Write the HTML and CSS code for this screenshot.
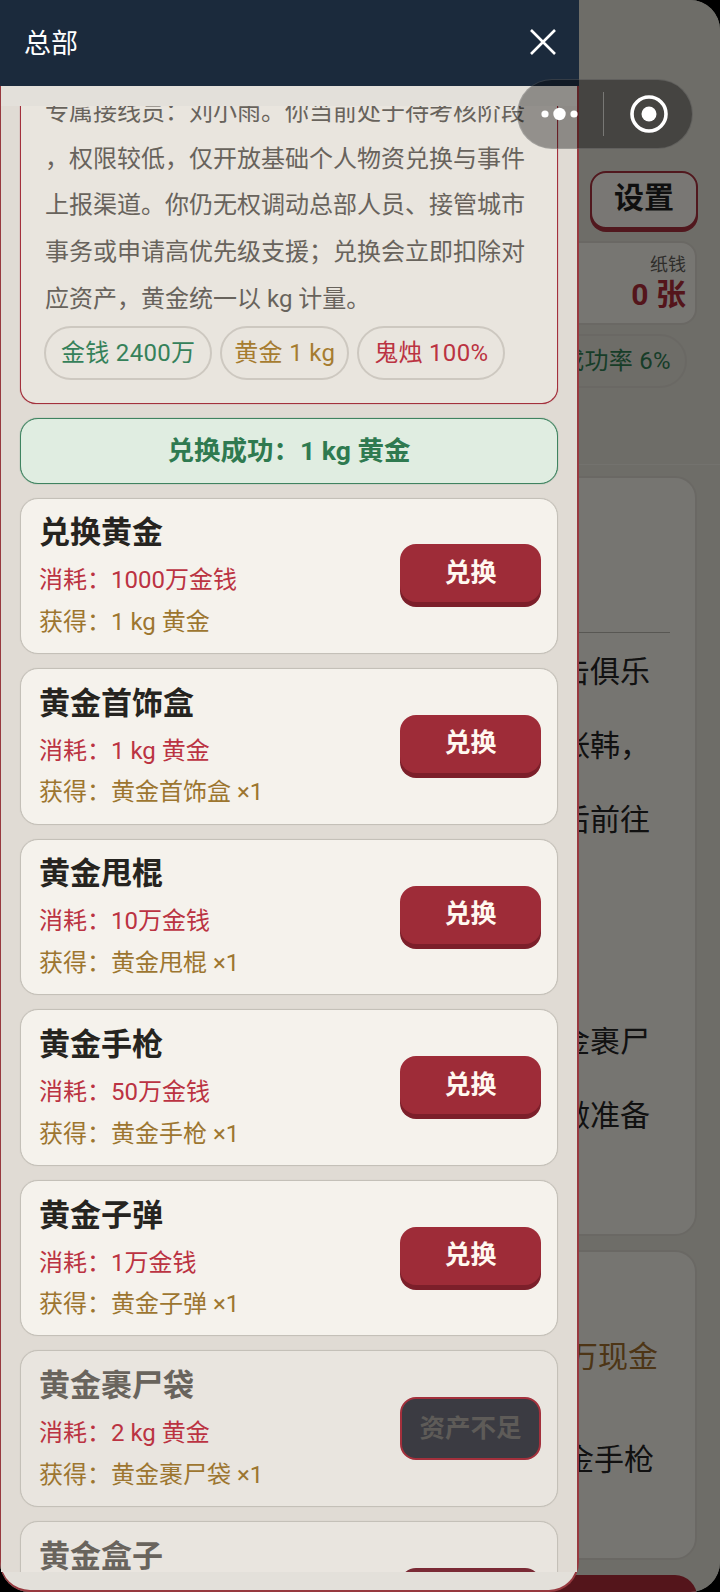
FILE: index.html
```html
<!DOCTYPE html>
<html lang="zh-CN">
<head>
    <meta charset="UTF-8">
    <meta name="viewport" content="width=device-width, initial-scale=1.0">
    <title>总部</title>
    <link rel="stylesheet" href="styles.css">
</head>
<body>

<div class="page">
    <div class="top-tools">
        <button class="btn-settings">设置</button>
    </div>
    <div class="stats">
        <div class="stat stat-gold">
            <small>黄金</small>
            <span>1 kg</span>
        </div>
        <div class="stat stat-paper">
            <small>纸钱</small>
            <span>0 张</span>
        </div>
    </div>
    <div class="rate-row">
        <div class="rate-chip">任务成功率 6%</div>
    </div>
    <div class="story-card">
        <div class="story-line"></div>
        <p>前往金樽拳击俱乐</p>
        <p>部找到老板张韩，</p>
        <p>或者在夜深后前往</p>
        <p class="story-gap">带上黄金裹尸</p>
        <p>袋，提前做准备</p>
    </div>
    <div class="reward-card">
        <p class="reward-money">奖励一百万现金</p>
        <p class="reward-item">以及黄金手枪</p>
    </div>
    <div class="bottom-bar"></div>
</div>

<div class="overlay"></div>

<div class="drawer">
    <div class="drawer-head">
        <span class="drawer-title">总部</span>
        <svg class="drawer-close" width="28" height="28" viewBox="0 0 28 28">
            <path d="M2 2 L26 26 M26 2 L2 26" stroke="#fff" stroke-width="2.6" fill="none"/>
        </svg>
    </div>
    <div class="drawer-main">
        <div class="drawer-scroll">
            <div class="intro">
                <p>专属接线员：刘小雨。你当前处于待考核阶段，权限较低，仅开放基础个人物资兑换与事件上报渠道。你仍无权调动总部人员、接管城市事务或申请高优先级支援；兑换会立即扣除对应资产，黄金统一以 kg 计量。</p>
                <div class="chips">
                    <span class="chip chip-green">金钱 2400万</span>
                    <span class="chip chip-gold">黄金 1 kg</span>
                    <span class="chip chip-red">鬼烛 100%</span>
                </div>
            </div>
            <div class="notice">兑换成功：1 kg 黄金</div>

            <div class="item">
                <div class="item-info">
                    <h3>兑换黄金</h3>
                    <p class="cost">消耗：1000万金钱</p>
                    <p class="gain">获得：1 kg 黄金</p>
                </div>
                <button class="btn-swap">兑换</button>
            </div>
            <div class="item">
                <div class="item-info">
                    <h3>黄金首饰盒</h3>
                    <p class="cost">消耗：1 kg 黄金</p>
                    <p class="gain">获得：黄金首饰盒 ×1</p>
                </div>
                <button class="btn-swap">兑换</button>
            </div>
            <div class="item">
                <div class="item-info">
                    <h3>黄金甩棍</h3>
                    <p class="cost">消耗：10万金钱</p>
                    <p class="gain">获得：黄金甩棍 ×1</p>
                </div>
                <button class="btn-swap">兑换</button>
            </div>
            <div class="item">
                <div class="item-info">
                    <h3>黄金手枪</h3>
                    <p class="cost">消耗：50万金钱</p>
                    <p class="gain">获得：黄金手枪 ×1</p>
                </div>
                <button class="btn-swap">兑换</button>
            </div>
            <div class="item">
                <div class="item-info">
                    <h3>黄金子弹</h3>
                    <p class="cost">消耗：1万金钱</p>
                    <p class="gain">获得：黄金子弹 ×1</p>
                </div>
                <button class="btn-swap">兑换</button>
            </div>
            <div class="item item-off">
                <div class="item-info">
                    <h3>黄金裹尸袋</h3>
                    <p class="cost">消耗：2 kg 黄金</p>
                    <p class="gain">获得：黄金裹尸袋 ×1</p>
                </div>
                <button class="btn-swap btn-off">资产不足</button>
            </div>
            <div class="item item-off">
                <div class="item-info">
                    <h3>黄金盒子</h3>
                    <p class="cost">消耗：1 kg 黄金</p>
                    <p class="gain">获得：黄金盒子 ×1</p>
                </div>
                <button class="btn-swap btn-dim">兑换</button>
            </div>
        </div>
    </div>
</div>

<div class="capsule">
    <svg width="37" height="14" viewBox="0 0 37 14">
        <circle cx="4" cy="7" r="3.6" fill="#fff"/>
        <circle cx="18.5" cy="7" r="6.2" fill="#fff"/>
        <circle cx="33" cy="7" r="3.6" fill="#fff"/>
    </svg>
    <div class="capsule-line"></div>
    <svg width="40" height="40" viewBox="0 0 40 40">
        <circle cx="20" cy="20" r="17" stroke="#fff" stroke-width="3.6" fill="none"/>
        <circle cx="20" cy="20" r="7.5" fill="#fff"/>
    </svg>
</div>

</body>
</html>
```

FILE: styles.css
```css
* {
    box-sizing: border-box;
}
html, body {
    margin: 0;
    height: 1592px;
    overflow: hidden;
}
body {
    position: relative;
    width: 720px;
    background: #000;
    font-family: Roboto, "Noto Sans CJK SC", sans-serif;
}
p, h3 {
    margin: 0;
}
button {
    font-family: inherit;
}

/* page behind the drawer */
.page {
    height: 1592px;
    padding-top: 171px;
    border-radius: 30px;
    background: #dcdad0;
    display: flex;
    flex-direction: column;
    align-items: flex-end;
    overflow: hidden;
}
.page > * {
    flex: none;
}
.top-tools {
    padding-right: 22px;
}
.btn-settings {
    display: block;
    width: 108px;
    height: 58px;
    margin-bottom: 3px;
    padding: 0 0 10px;
    border: 2px solid #a3303c;
    border-radius: 16px;
    background: #f2efe9;
    box-shadow: 0 3px 0 #a3303c;
    color: #1f1f1f;
    font-size: 30px;
    font-weight: 700;
}
.stats {
    display: flex;
    justify-content: flex-end;
    gap: 54px;
    width: 420px;
    height: 84px;
    margin: 9px 23px 0 0;
    padding: 9px 9px 0 0;
    border: 2px solid #d4d1c8;
    border-radius: 16px;
    background: #efece5;
}
.stat {
    text-align: right;
}
.stat small {
    display: block;
    font-size: 18px;
    line-height: 26px;
    color: #5c5a55;
}
.stat span {
    display: block;
    font-size: 30px;
    font-weight: 700;
    line-height: 34px;
}
.stat-gold span {
    color: #9a6a20;
}
.stat-paper span {
    color: #a82a36;
}
.rate-row {
    margin: 9px 33px 0 0;
}
.rate-chip {
    height: 54px;
    padding: 0 14px 0 14px;
    border: 2px solid #d4d1c8;
    border-radius: 27px;
    font-size: 24px;
    letter-spacing: 0.3px;
    line-height: 50px;
    color: #2f7a50;
    white-space: nowrap;
}
.story-card {
    width: 100%;
    height: 772px;
    margin-top: 76px;
    padding: 168px 70px 0 0;
    position: relative;
    text-align: right;
    background: linear-gradient(#e6e4dc, #e6e4dc) no-repeat right top / 100% 1px;
}
.story-card::before {
    content: "";
    position: absolute;
    top: 12px;
    right: 23px;
    width: 500px;
    bottom: 0;
    border: 2px solid #d4d1c8;
    border-radius: 22px;
    background: #eceae3;
}
.story-line {
    position: relative;
    height: 1px;
    margin: 0 -20px 2px 0;
    background: #b0aea6;
}
.story-card p {
    position: relative;
    font-size: 30px;
    line-height: 74px;
    color: #222;
}
.story-card .story-gap {
    margin-top: 148px;
}
.reward-card {
    width: 500px;
    height: 310px;
    margin: 14px 23px 0 0;
    border: 2px solid #d4d1c8;
    border-radius: 22px;
    background: #eceae3;
    text-align: right;
    font-size: 30px;
}
.reward-money {
    margin: 85px 37px 0 0;
    line-height: 40px;
    color: #9a6a2c;
}
.reward-item {
    margin: 63px 41px 0 0;
    line-height: 40px;
    color: #222;
}
.bottom-bar {
    width: 500px;
    height: 40px;
    margin: 15px 23px 0 0;
    border-radius: 22px 22px 0 0;
    background: #a82a36;
}
.overlay {
    position: absolute;
    inset: 0;
    border-radius: 30px;
    background: rgba(0, 0, 0, 0.5);
}

/* drawer */
.drawer {
    position: absolute;
    left: 0;
    top: 0;
    width: 579px;
    height: 1592px;
    display: flex;
    flex-direction: column;
}
.drawer-head {
    flex: none;
    height: 86px;
    padding: 0 22px 3px 24px;
    display: flex;
    align-items: center;
    justify-content: space-between;
    background: #1b2a3c;
}
.drawer-title {
    font-size: 27px;
    color: #fff;
}
.drawer-main {
    flex: 1;
    min-height: 0;
    padding: 20px 0 18px;
    border: solid #97393f;
    border-width: 0 2px 2px 1px;
    border-radius: 0 0 30px 30px;
    background: #e3e0da;
}
.drawer-scroll {
    height: 100%;
    padding: 0 19px;
    overflow: hidden;
    background: #e0dbd4;
}
.intro {
    margin-top: -31px;
    padding: 13px 32px 23px 24px;
    border: 1px solid #a3303c;
    border-top-color: transparent;
    border-radius: 16px;
    background: #e9e5de;
    box-shadow: 0 0 1px #a3303c;
}
.intro p {
    font-size: 24px;
    line-height: 46.7px;
    line-break: anywhere;
    color: #68635c;
}
.chips {
    display: flex;
    gap: 8px;
    margin: 3px 0 0 -1px;
}
.chip {
    height: 54px;
    padding: 0 15px;
    border: 2px solid #cdc8c0;
    border-radius: 27px;
    font-size: 24px;
    letter-spacing: 0.3px;
    line-height: 50px;
    white-space: nowrap;
}
.chip-green {
    color: #35815a;
}
.chip-gold {
    padding: 0 12px;
    color: #a67c30;
}
.chip-red {
    color: #bb3342;
}
.notice {
    height: 66px;
    margin-top: 14px;
    border: 1px solid #3f8360;
    border-radius: 18px;
    background: #e0ede1;
    box-shadow: 0 0 1px #3f8360;
    color: #2f7a50;
    font-size: 26.5px;
    font-weight: 700;
    line-height: 63px;
    text-align: center;
}
.item {
    display: flex;
    align-items: center;
    justify-content: space-between;
    height: 156.6px;
    margin-top: 14px;
    padding: 0 16px 0 18px;
    border: 1px solid #c4c0b8;
    border-radius: 18px;
    background: #f5f2ec;
    box-shadow: 0 0 1px #c4c0b8;
}
.item-info {
    padding-top: 5px;
}
.item h3 {
    font-size: 31px;
    font-weight: 700;
    line-height: 40px;
    margin-bottom: 7px;
    color: #262420;
}
.item-info p {
    font-size: 24px;
    line-height: 41.6px;
}
.cost {
    color: #bb3342;
}
.gain {
    color: #9d7630;
}
.btn-swap {
    width: 141px;
    height: 58px;
    margin-bottom: 5px;
    padding: 0 0 6px;
    border: 0;
    border-radius: 16px;
    background: #9e2c38;
    box-shadow: 0 5px 0 #7c1f2a;
    color: #fff8f0;
    font-size: 26px;
    font-weight: 700;
}
.item-off {
    background: #e9e5df;
}
.item-off h3 {
    color: #69645d;
}
.btn-off {
    height: 63px;
    margin-bottom: 0;
    border: 2px solid #a3303c;
    background: #3b3b42;
    box-shadow: none;
    color: #5e5b58;
    font-size: 25.5px;
}
.btn-dim {
    background: #7a2a35;
    box-shadow: none;
}

/* wechat capsule */
.capsule {
    position: absolute;
    left: 517px;
    top: 79px;
    width: 176px;
    height: 70px;
    padding: 0 23px 0 23px;
    display: flex;
    align-items: center;
    justify-content: space-between;
    border: 1px solid rgba(255, 255, 255, 0.15);
    border-radius: 35px;
    background: rgba(0, 0, 0, 0.37);
}
.capsule-line {
    width: 1px;
    height: 44px;
    background: rgba(255, 255, 255, 0.28);
}
```
